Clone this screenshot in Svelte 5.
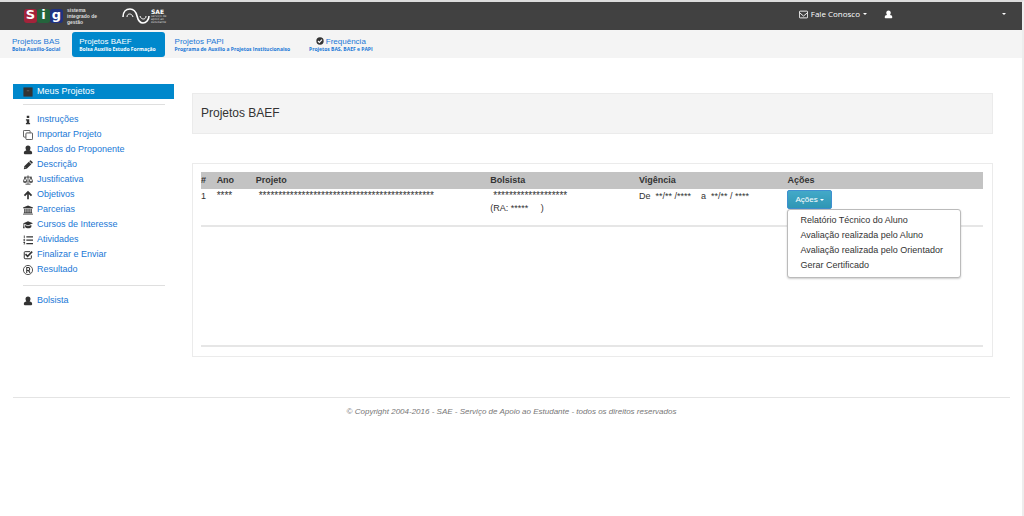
<script lang="ts">
  const tabs = [
    { title: 'Projetos BAS', sub: 'Bolsa Auxílio-Social' },
    { title: 'Projetos BAEF', sub: 'Bolsa Auxílio Estudo Formação', active: true },
    { title: 'Projetos PAPI', sub: 'Programa de Auxílio a Projetos Institucionaiso' },
    { title: 'Frequência', sub: 'Projetos BAS, BAEF e PAPI', icon: 'check' },
  ];

  const menu = [
    { icon: 'info', label: 'Instruções' },
    { icon: 'clone', label: 'Importar Projeto' },
    { icon: 'user', label: 'Dados do Proponente' },
    { icon: 'pencil', label: 'Descrição' },
    { icon: 'balance', label: 'Justificativa' },
    { icon: 'arrow', label: 'Objetivos' },
    { icon: 'bank', label: 'Parcerias' },
    { icon: 'cap', label: 'Cursos de Interesse' },
    { icon: 'list', label: 'Atividades' },
    { icon: 'tick', label: 'Finalizar e Enviar' },
    { icon: 'registered', label: 'Resultado' },
  ];

  const actions = [
    'Relatório Técnico do Aluno',
    'Avaliação realizada pelo Aluno',
    'Avaliação realizada pelo Orientador',
    'Gerar Certificado',
  ];

  let open = true;
</script>

{#snippet icon(name: string)}
  <svg class="icon" viewBox="0 0 24 24" aria-hidden="true">
    {#if name === 'info'}
      <path fill="currentColor" d="M9 2h6v5H9zM7 10h8v9h2v3H7v-3h2v-6H7z" />
    {:else if name === 'clone'}
      <g fill="none" stroke="currentColor" stroke-width="2">
        <path d="M6 17H3q-2 0-2-2V3q0-2 2-2h12q2 0 2 2v3" />
        <rect x="7" y="7" width="16" height="16" rx="2" />
      </g>
    {:else if name === 'user'}
      <path fill="currentColor" d="M12 1c4 0 6 3 6 6 0 2-1 4-2 6 4 0 6 2 6 6v1q0 2-2 2H4q-2 0-2-2v-1c0-4 2-6 6-6-1-2-2-4-2-6 0-3 2-6 6-6z" />
    {:else if name === 'pencil'}
      <path fill="currentColor" d="M2 22l1-7L14 4l6 6L9 21zM15 3l2-2q1-1 2 0l4 4q1 1 0 2l-2 2z" />
      <path stroke="#fff" stroke-width="1.2" d="M4 17l3 3" />
    {:else if name === 'balance'}
      <g fill="none" stroke="currentColor" stroke-width="2">
        <path d="M12 1v20M6 22h12M3 5h18M5 5l-4 10M5 5l4 10M19 5l-4 10M19 5l4 10" />
      </g>
      <path fill="currentColor" d="M0 15h10c0 5-10 5-10 0zM14 15h10c0 5-10 5-10 0z" />
    {:else if name === 'arrow'}
      <path fill="currentColor" d="M12 2l10 10-3 3-5-5v12h-4V10l-5 5-3-3z" />
    {:else if name === 'bank'}
      <path fill="currentColor" d="M12 1l12 5v2H0V6zM3 9h3v9H3zM8 9h3v9H8zM13 9h3v9h-3zM18 9h3v9h-3zM2 18h20v2H2zM0 21h24v2H0z" />
    {:else if name === 'cap'}
      <path fill="currentColor" d="M12 3l12 5-12 5L3 9v5l1 6H0l1-6V8zM5 12l7 3 8-3v5c-2 4-13 4-15 0z" />
    {:else if name === 'list'}
      <path fill="currentColor" d="M8 3h16v3H8zM8 11h16v3H8zM8 19h16v3H8zM2 1h2v7H2zM1 10h4v2l-2 2h2v1H1v-2l2-1H1zM1 17h4v6H1v-1h3v-1H2v-1h2v-1H1z" />
    {:else if name === 'tick'}
      <g fill="none" stroke="currentColor">
        <path stroke-width="2.4" d="M20 13v6q0 2-2 2H5q-2 0-2-2V6q0-2 2-2h12" />
        <path stroke-width="4" d="M6 10l5 5L22 4" />
      </g>
    {:else if name === 'registered'}
      <g fill="none" stroke="currentColor" stroke-width="2">
        <circle cx="12" cy="12" r="11" />
        <path stroke-width="2.6" d="M9 19V6h4q3 0 3 3.500t-3 3.500H9m4 0l4 6" />
      </g>
    {:else if name === 'check'}
      <circle cx="12" cy="12" r="11" fill="currentColor" />
      <path fill="none" stroke="#fff" stroke-width="3.500" d="M6 12l4 4 8-8" />
    {:else if name === 'mail'}
      <g fill="none" stroke="currentColor" stroke-width="2.4">
        <rect x="1" y="3" width="22" height="18" rx="2" />
        <path d="M1 7l11 9 11-9" />
      </g>
    {:else if name === 'book'}
      <rect x="1" y="1" width="22" height="22" fill="currentColor" />
      <path stroke="#666" stroke-width="2" d="M9 9h6" />
    {/if}
  </svg>
{/snippet}

<div class="page">
  <header>
    <a class="brand" href="#sig" aria-label="SIG">
      <span class="sig"><b class="s">S</b><b class="i">i</b><b class="g">g</b></span>
      <span class="tagline">sistema<br />integrado de<br />gestão</span>
    </a>
    <a class="brand sae" href="#sae" aria-label="SAE">
      <svg viewBox="0 0 28 16" aria-hidden="true">
        <g fill="none" stroke="#fff">
          <path stroke-width="1.6" d="M1 9C1 4 4 1 8 1s6 3 7 7c1 4 3 7 6 7s6-3 6-7" />
          <path stroke-width="1" d="M5 9c0-4 5-4 6 0M18 8c1 4 6 4 6 0" />
        </g>
      </svg>
      <span class="sae-text"><b>SAE</b><small>serviço de<br />apoio ao<br />estudante</small></span>
    </a>
    <nav class="user-nav">
      <a href="#contato">{@render icon('mail')} Fale Conosco <i class="caret"></i></a>
      <a class="account" href="#conta" aria-label="Conta">{@render icon('user')}<i class="caret"></i></a>
    </nav>
  </header>

  <nav class="tabs">
    {#each tabs as tab}
      <a href="#tab" class:active={tab.active} class:center={tab.icon}>
        <span class="tab-title">
          {#if tab.icon}{@render icon(tab.icon)}{/if}
          {tab.title}
        </span>
        <span class="tab-sub">{tab.sub}</span>
      </a>
    {/each}
  </nav>

  <div class="body">
    <aside>
      <a class="current" href="#projetos">{@render icon('book')} Meus Projetos</a>
      <hr />
      <ul>
        {#each menu as item}
          <li><a href="#item">{@render icon(item.icon)} {item.label}</a></li>
        {/each}
      </ul>
      <hr />
      <ul>
        <li><a href="#bolsista">{@render icon('user')} Bolsista</a></li>
      </ul>
    </aside>

    <main>
      <h1>Projetos BAEF</h1>

      <section>
        <table>
          <thead>
            <tr>
              <th class="num">#</th>
              <th class="ano">Ano</th>
              <th class="projeto">Projeto</th>
              <th class="bolsista">Bolsista</th>
              <th class="vigencia">Vigência</th>
              <th>Ações</th>
            </tr>
          </thead>
          <tbody>
            <tr>
              <td>1</td>
              <td class="mask">****</td>
              <td class="mask indent">*********************************************</td>
              <td>
                <div class="mask indent">*******************</div>
                (RA: ***** <span class="ra-end">)</span>
              </td>
              <td>De &nbsp;**/** /**** &nbsp;&nbsp; a &nbsp;**/** / ****</td>
              <td>
                <div class="dropdown">
                  <button type="button" aria-expanded={open} on:click={() => (open = !open)}>
                    Ações <i class="caret"></i>
                  </button>
                  {#if open}
                    <ul class="options">
                      {#each actions as action}
                        <li><a href="#acao">{action}</a></li>
                      {/each}
                    </ul>
                  {/if}
                </div>
              </td>
            </tr>
          </tbody>
        </table>
        <hr />
      </section>
    </main>
  </div>

  <footer>© Copyright 2004-2016 - SAE - Serviço de Apoio ao Estudante - todos os direitos reservados</footer>
</div>

<style>
  :global(body) {
    background: #fff;
  }

  .page {
    font-family: "Liberation Sans", Arial, Helvetica, sans-serif;
    font-size: 9px;
    line-height: 12px;
    color: #333;
    border-top: 2px solid #dcdcdc;
    border-right: 2px solid #ededed;
    box-sizing: border-box;
    min-height: 100vh;
  }

  a {
    color: #1a78d6;
    text-decoration: none;
  }

  ul {
    list-style: none;
    margin: 0;
    padding: 0;
  }

  hr {
    border: 0;
    border-top: 1px solid #dfdfdf;
    margin: 0;
  }

  .icon {
    width: 10px;
    height: 10px;
    flex: none;
    color: #333;
  }

  .caret {
    display: inline-block;
    border: 2px solid transparent;
    border-top-color: currentColor;
    border-bottom: 0;
  }

  header {
    display: flex;
    align-items: center;
    height: 28px;
    padding-left: 24px;
    background: #414141;
  }

  .brand {
    display: flex;
    align-items: center;
    gap: 4px;
    color: #fff;
  }

  .sig {
    display: flex;
    font: bold 13px/14px "DejaVu Sans", sans-serif;
  }

  .sig b {
    width: 13px;
    height: 14px;
    line-height: 12px;
    text-align: center;
    border-radius: 3px;
  }

  .s { background: #a3233a; }
  .i { background: #24643c; }
  .g { background: #203282; }

  .tagline {
    font: bold 5px/6px "Liberation Sans", Arial, sans-serif;
    color: #ddd;
  }

  .sae {
    margin-left: 25px;
    gap: 1px;
  }

  .sae svg {
    width: 28px;
    height: 16px;
  }

  .sae-text {
    display: flex;
    flex-direction: column;
    font: 6px/6px "DejaVu Sans", sans-serif;
  }

  .sae-text small {
    font-size: 3px;
    line-height: 3px;
    color: #ccc;
  }

  .user-nav {
    display: flex;
    align-items: center;
    gap: 17px;
    margin-left: auto;
    padding-right: 16px;
    font-family: "Open Sans", sans-serif;
    font-size: 8px;
  }

  .user-nav a {
    display: flex;
    align-items: center;
    gap: 3px;
    padding-bottom: 4px;
    color: #fff;
  }

  .user-nav .icon {
    width: 9px;
    height: 9px;
    color: #fff;
  }

  .user-nav .account {
    justify-content: space-between;
    width: 122px;
  }

  .tabs {
    display: flex;
    align-items: center;
    gap: 3px;
    height: 28px;
    padding-left: 5px;
    background: #f4f4f4;
  }

  .tabs a {
    display: flex;
    flex-direction: column;
    padding: 5px 9px 5px 7px;
    border-radius: 3px;
  }

  .tabs .active {
    background: #0088cc;
    color: #fff;
  }

  .tabs .center {
    align-items: center;
  }

  .tab-title {
    display: flex;
    align-items: center;
    gap: 2px;
    font-size: 8px;
    line-height: 9px;
  }

  .tab-title .icon {
    width: 8px;
    height: 8px;
  }

  .tab-sub {
    font-family: "Open Sans", sans-serif;
    font-size: 5px;
    line-height: 6px;
    font-weight: bold;
  }

  .body {
    display: flex;
    gap: 18px;
    padding: 26px 29px 40px 13px;
  }

  aside {
    width: 161px;
    flex: none;
    line-height: 15px;
  }

  aside a {
    display: flex;
    align-items: center;
    gap: 4px;
    padding-left: 10px;
  }

  aside .current {
    background: #0088cc;
    color: #fff;
  }

  aside hr {
    margin: 5px 9px 7px 10px;
  }

  aside ul {
    margin-bottom: 8px;
  }

  main {
    flex: 1;
    padding-top: 9px;
  }

  h1 {
    margin: 0 0 29px;
    padding: 0 8px;
    border: 1px solid #ebebeb;
    background: #f4f4f4;
    font-size: 12px;
    line-height: 39px;
    font-weight: normal;
  }

  section {
    padding: 8px 9px 9px 8px;
    border: 1px solid #ebebeb;
  }

  section hr {
    border-top: 2px solid #e6e6e6;
  }

  table {
    width: 100%;
    table-layout: fixed;
    border-collapse: collapse;
    margin-bottom: 118px;
    border-bottom: 2px solid #e6e6e6;
  }

  th {
    padding: 0;
    line-height: 17px;
    text-align: left;
    background: #c3c3c3;
  }

  td {
    padding: 1px 0 0;
    vertical-align: top;
  }

  tbody tr {
    height: 37px;
  }

  .num { width: 2%; }
  .ano { width: 5%; }
  .projeto { width: 30%; }
  .bolsista { width: 19%; }
  .vigencia { width: 19%; }

  .mask {
    font-size: 10px;
  }

  .indent {
    padding-left: 3px;
  }

  .ra-end {
    margin-left: 10px;
  }

  .dropdown {
    position: relative;
  }

  button {
    display: block;
    padding: 0 7px;
    border: 1px solid #3f8fd0;
    border-radius: 2px;
    background: linear-gradient(#43a9c8, #2f96b4);
    color: #fff;
    font: 8px/17px "Liberation Sans", Arial, sans-serif;
  }

  button .caret {
    vertical-align: middle;
  }

  .options {
    position: absolute;
    top: 100%;
    left: 0;
    padding: 3px 17px 4px 12px;
    border: 1px solid #bbb;
    border-radius: 3px;
    background: #fff;
    box-shadow: 0 1px 2px #0003;
    line-height: 15px;
    white-space: nowrap;
  }

  .options a {
    color: #333;
  }

  footer {
    margin: 0 12px 0 13px;
    padding-top: 8px;
    border-top: 1px solid #e4e4e4;
    color: #777;
    font-size: 8px;
    font-style: italic;
    text-align: center;
  }
</style>
